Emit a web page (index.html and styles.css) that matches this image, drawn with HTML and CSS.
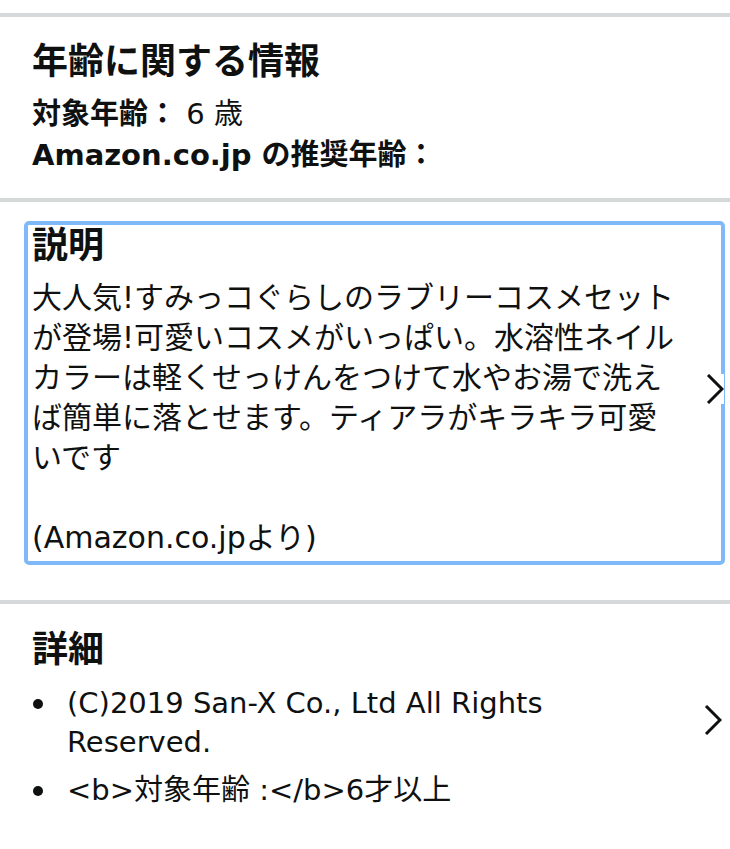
FILE: index.html
```html
<!DOCTYPE html>
<html>

<head>
  <meta charset="utf-8">
  <title>商品の詳細</title>
  <link rel="stylesheet" href="styles.css">
</head>

<body>
  <div class="divider"></div>

  <div class="section age">
    <h2 class="title">年齢に関する情報</h2>
    <div class="age_line"><b>対象年齢：</b> 6 歳</div>
    <div class="age_line"><b>Amazon.co.jp の推奨年齢：</b></div>
  </div>

  <div class="divider"></div>

  <div class="desc_wrap">
    <div class="desc_box">
      <h2 class="title tight">説明</h2>
      <p class="desc_text">大人気!すみっコぐらしのラブリーコスメセット<br>が登場!可愛いコスメがいっぱい。水溶性ネイル<br>カラーは軽くせっけんをつけて水やお湯で洗え<br>ば簡単に落とせます。ティアラがキラキラ可愛<br>いです<br><br>(Amazon.co.jpより)</p>
    </div>
    <span class="chevron">
      <svg width="18" height="30" viewBox="0 0 18 30">
        <path d="M2 1 L16 15 L2 29" fill="none" stroke="#0f1111" stroke-width="3" />
      </svg>
    </span>
  </div>

  <div class="divider"></div>

  <div class="section details">
    <h2 class="title">詳細</h2>
    <ul class="bullets">
      <li>(C)2019 San-X Co., Ltd All Rights Reserved.</li>
      <li>&lt;b&gt;対象年齢 :&lt;/b&gt;6才以上</li>
    </ul>
    <span class="chevron">
      <svg width="18" height="30" viewBox="0 0 18 30">
        <path d="M2 1 L16 15 L2 29" fill="none" stroke="#0f1111" stroke-width="3" />
      </svg>
    </span>
  </div>
</body>

</html>
```

FILE: styles.css
```css
body {
  margin: 0;
  background-color: #fff;
  color: #0f1111;
  font-family: "DejaVu Sans", "Noto Sans CJK JP", sans-serif;
  font-size: 29px;
}

.divider {
  height: 4px;
  background-color: #d5d9d9;
  margin-top: 13px;
}

.section {
  padding: 0 32px;
}

.title {
  margin: 0;
  font-size: 36px;
  line-height: 40px;
  font-weight: bold;
}

/* age block */
.age {
  padding-top: 25px;
  padding-bottom: 22px;
}

.age .title {
  margin-bottom: 12px;
}

.age_line {
  line-height: 41px;
}

.age + .divider {
  margin-top: 0;
}

/* description */
.desc_wrap {
  position: relative;
  padding: 19px 5px 35px 24px;
}

.desc_box {
  border: 4px solid #80b9f9;
  border-radius: 5px;
  padding: 1px 4px 3px 4px;
}

.tight {
  margin-bottom: 12px;
}

.desc_text {
  margin: 0;
  line-height: 40px;
  font-size: 30px;
}

.desc_wrap + .divider {
  margin-top: 0;
}

.chevron {
  position: absolute;
  right: 6px;
  background-color: #fff;
  display: flex;
  padding: 0 2px;
}

.desc_wrap .chevron {
  top: 172px;
  padding: 0;
  right: 6px;
}

/* details */
.details {
  position: relative;
  padding-top: 26px;
  padding-bottom: 30px;
}

.details .chevron {
  top: 101px;
}

.bullets {
  list-style: none;
  margin: 14px 0 0 0;
  padding-left: 1px;
  padding-right: 100px;
  line-height: 39px;
}

.bullets li {
  display: flex;
  margin-bottom: 9px;
}

.bullets li::before {
  content: "";
  flex: none;
  width: 10px;
  height: 10px;
  border-radius: 50%;
  background-color: #0f1111;
  margin: 15px 24px 0 0;
}
```
